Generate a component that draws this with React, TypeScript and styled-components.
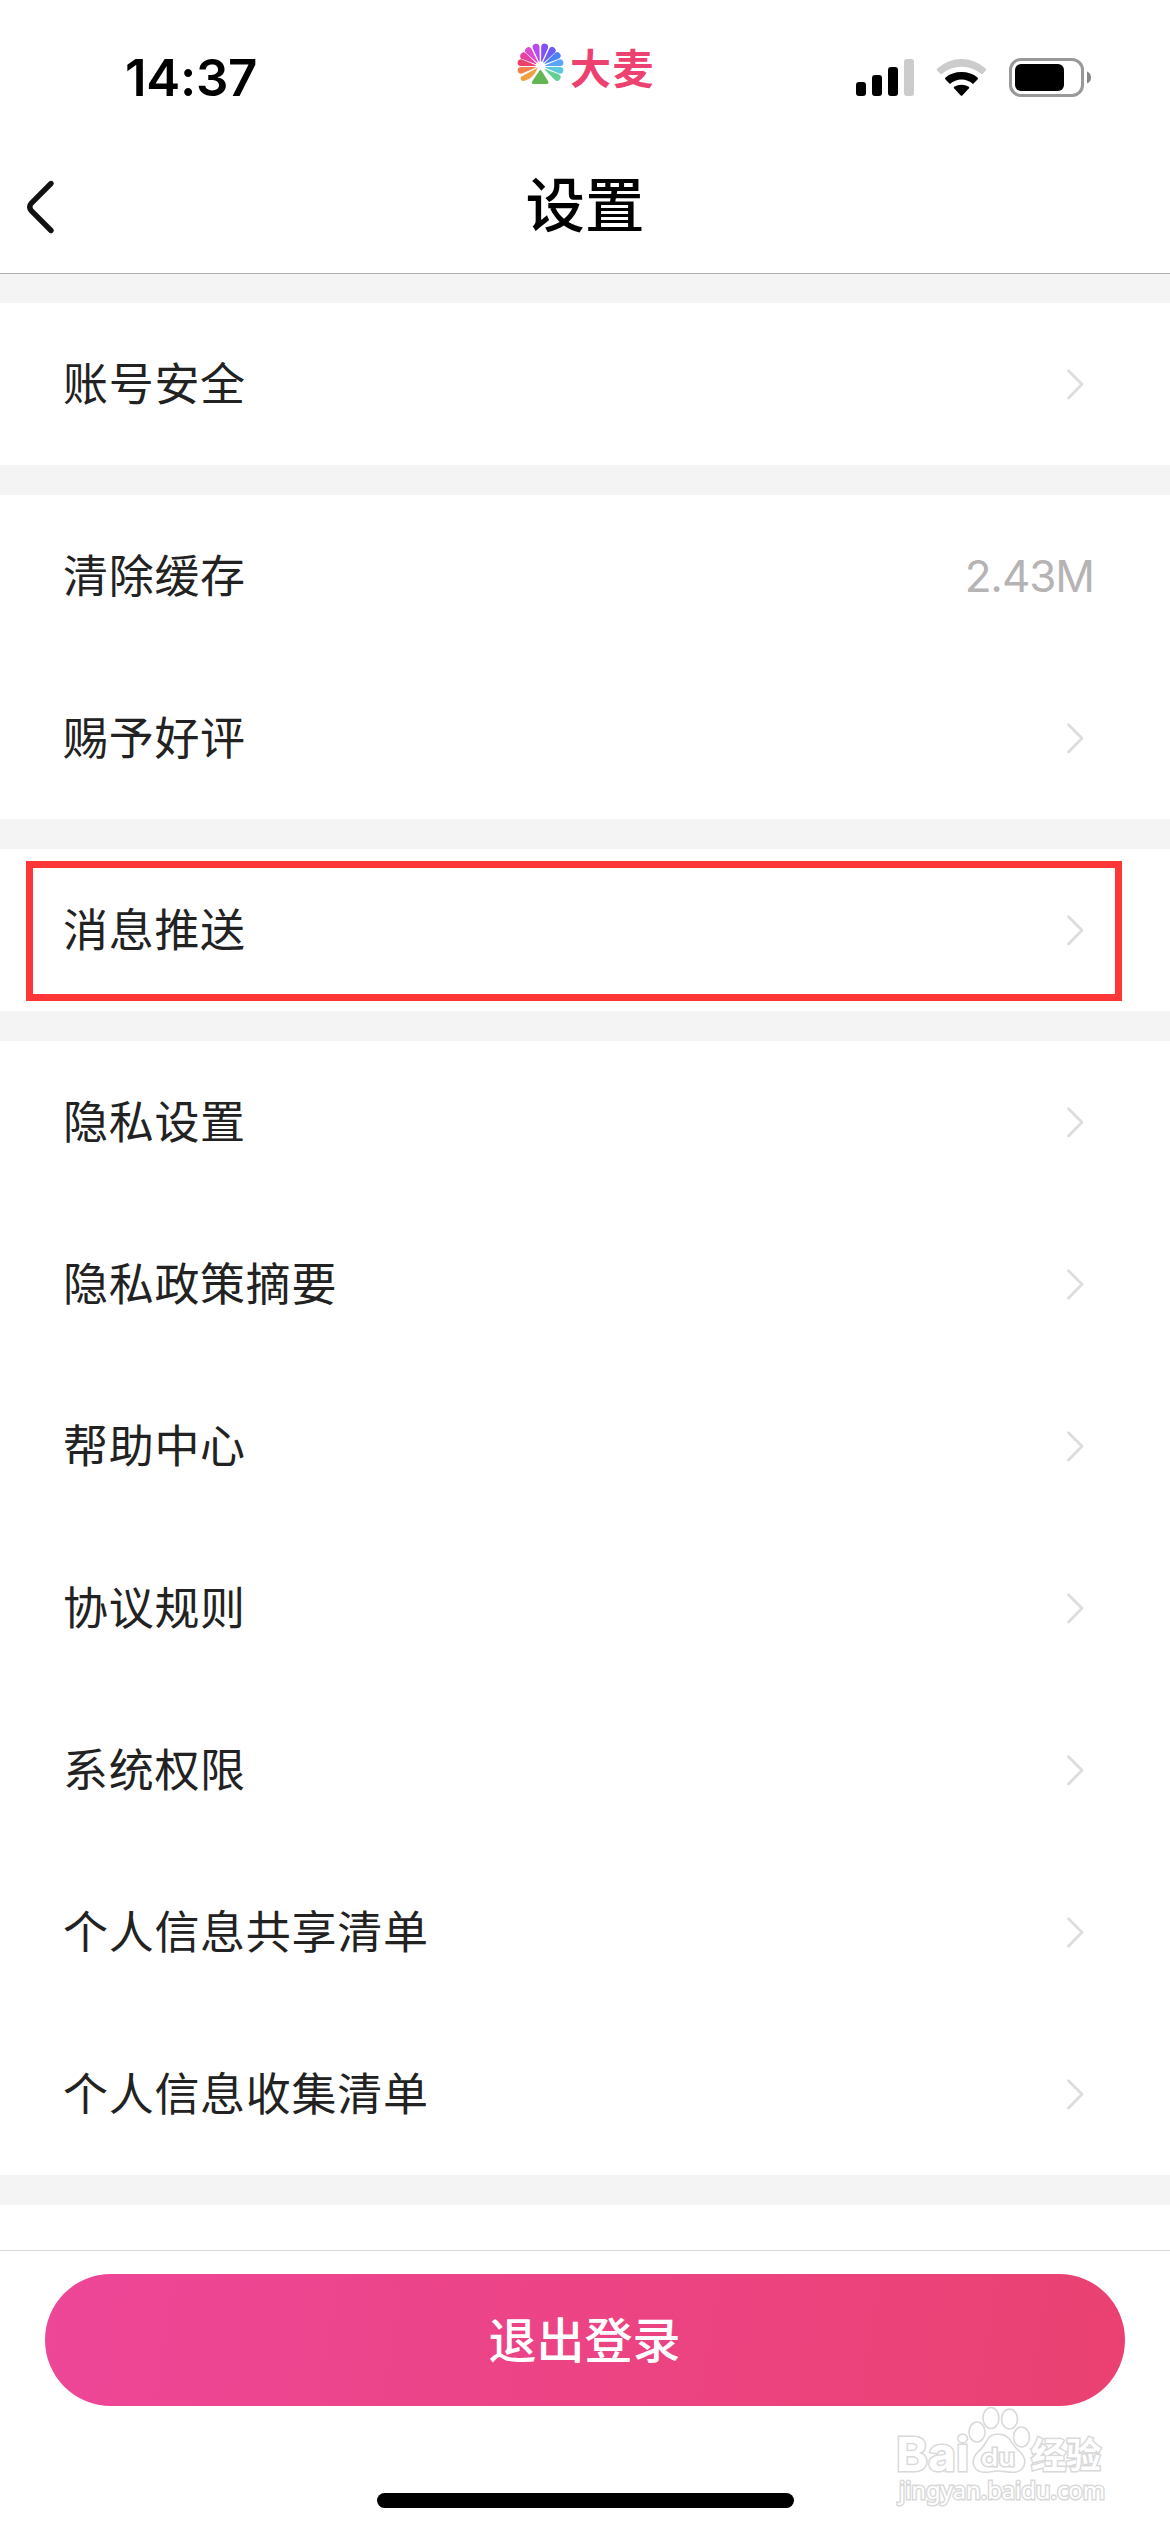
import React from "react";
import styled, { createGlobalStyle } from "styled-components";

const Global = createGlobalStyle`
  * { box-sizing: border-box; }
  body {
    margin: 0;
    background: #fff;
    font-family: Inter, "Noto Sans CJK SC", sans-serif;
  }
`;

const Screen = styled.div`
  position: relative;
  display: flex;
  flex-direction: column;
  width: 1170px;
  height: 2532px;
  overflow: hidden;
  background: #fff;
`;

const StatusBar = styled.header`
  display: grid;
  grid-template-columns: 391px 1fr auto;
  height: 141px;
  padding: 0 78px 0 125px;
`;

const Clock = styled.time`
  padding-top: 47px;
  font-size: 51px;
  line-height: 62px;
  font-weight: 600;
  letter-spacing: -0.3px;
  color: #000;
`;

const Brand = styled.div`
  display: flex;
  padding-top: 43px;
`;

const BrandName = styled.span`
  margin: -3px 0 0 4px;
  font-family: "Noto Sans CJK SC", sans-serif;
  font-size: 41px;
  line-height: 52px;
  font-weight: 700;
  letter-spacing: 1.5px;
  color: #ed4170;
`;

const StatusIcons = styled.div`
  display: flex;
  justify-content: flex-end;
  align-items: flex-start;
  padding-top: 58px;
`;

const StatusIcon = styled.svg<{ $gap?: number }>`
  flex: none;
  margin-left: ${({ $gap = 0 }) => $gap}px;
`;

const NavBar = styled.nav`
  display: grid;
  grid-template-columns: 80px 1fr 80px;
  align-items: center;
  height: 133px;
  border-bottom: 1px solid #adadad;
`;

const BackButton = styled.button`
  display: flex;
  padding: 0 0 0 24px;
  border: 0;
  background: none;
`;

const Title = styled.h1`
  margin: 0;
  padding-bottom: 12px;
  font-family: "Noto Sans CJK SC", sans-serif;
  font-size: 59.5px;
  line-height: 80px;
  font-weight: 500;
  text-align: center;
  color: #000;
`;

const Groups = styled.main`
  display: flex;
  flex-direction: column;
  gap: 30px;
  height: 1931px;
  padding: 29px 0 30px;
  background: #f4f4f4;
`;

const Group = styled.section`
  background: #fff;
`;

const Row = styled.div`
  position: relative;
  display: flex;
  align-items: center;
  justify-content: space-between;
  height: 162px;
  padding: 0 75px 0 63px;
`;

const Label = styled.span`
  padding-bottom: 4px;
  font-family: "Noto Sans CJK SC", sans-serif;
  font-size: 45px;
  letter-spacing: 0.7px;
  line-height: 64px;
  color: #222;
`;

const Value = styled.span`
  padding-right: 1px;
  font-size: 44px;
  line-height: 60px;
  letter-spacing: -1.1px;
  color: #b5b3b4;
`;

const Highlight = styled.div`
  position: absolute;
  top: 12px;
  left: 26px;
  width: 1096px;
  height: 140px;
  border: 7px solid #fd3737;
`;

const Footer = styled.footer`
  margin-top: 45px;
  padding: 23px 45px 0;
  border-top: 1px solid #dadada;
`;

const LogoutButton = styled.button`
  display: block;
  width: 100%;
  height: 132px;
  padding: 0 1px 6px 0;
  border: 0;
  border-radius: 66px;
  background: linear-gradient(100deg, #ee4698, #ea4171);
  font-family: "Noto Sans CJK SC", sans-serif;
  font-size: 48px;
  font-weight: 500;
  color: #fff;
`;

const HomeIndicator = styled.div`
  position: absolute;
  left: 377px;
  bottom: 24px;
  width: 417px;
  height: 15px;
  border-radius: 8px;
  background: #000;
`;

const Watermark = styled.svg`
  position: absolute;
  left: 880px;
  top: 2380px;
`;

const petals = [
  "#f2814c", "#ec4169", "#e83fa0", "#df4bd0", "#b44af0", "#8350f5",
  "#6a5cf6", "#4b83f7", "#5aa5f6", "#5bc8dc", "#64cf93",
];

const petalAngles = [-101, -79, -58, -37, -13, 12, 36, 57, 79, 101, 123];

const PetalLogo = () => (
  <svg width="50" height="46" viewBox="0 0 50 46">
    {petals.map((c, i) => (
      <path
        key={c}
        d="M24.100 18.500 21.100 4Q20.800 .300 24.500 .200 28.200 .300 27.900 4L24.900 18.500Z"
        fill={c}
        transform={`rotate(${petalAngles[i]} 24.500 23.500)`}
      />
    ))}
    <path d="M22 24.500 5.500 33.500q-1.300 1-.8 3 .8 2 3.800 1.300Q17 36 22 24.500Z" fill="#f0a043" />
    <path d="m23.200 28-6.500 9.500q-2 3.500 1 3.500h13q3 0 1-3.500l-6-9.500q-1.300-2-2.500 0Z" fill="#65b653" />
  </svg>
);

const Signal = () => (
  <StatusIcon width="60" height="40" viewBox="0 0 60 40">
    <rect x="1" y="24" width="10" height="14" rx="3" />
    <rect x="17" y="17" width="10" height="21" rx="3" />
    <rect x="33" y="9" width="10" height="29" rx="3" />
    <rect x="49" y="1" width="10" height="37" rx="3" fill="#ccc" />
  </StatusIcon>
);

const Wifi = () => (
  <StatusIcon $gap={21} width="52" height="40" viewBox="0 0 52 40">
    <path d="M1.300 12.500Q0 11.500 1.300 10.500 12 1 25.500 1t24.200 9.500q1.300 1 0 2L46 16.500Q37 8.700 25.500 8.700T5 16.500Z" fill="#ccc" />
    <path d="M9.500 21.500q-1-1 0-2Q16 14 25.500 14t16 5.500q1 1 0 2L37 26Q32 21.500 25.500 21.500T14 26Z" />
    <path d="M18.200 30.500q-.9-1 0-1.700Q21.500 26.700 25.500 26.700t7.300 2.100q.9.700 0 1.700L26.500 37.300q-1 1-2 0Z" />
  </StatusIcon>
);

const Battery = () => (
  <StatusIcon $gap={20} width="84" height="40" viewBox="0 0 84 40">
    <rect x="2.500" y="1.500" width="72" height="36" rx="10.500" fill="none" stroke="#999" strokeWidth="3" />
    <rect x="7" y="6" width="49" height="27" rx="6" />
    <path d="M79 13.500q4 1.500 4 6t-4 6Z" fill="#888" />
  </StatusIcon>
);

const Chevron = () => (
  <svg width="40" height="40" viewBox="0 0 40 40" fill="none" stroke="#ddd" strokeWidth="2.800" strokeLinecap="round" strokeLinejoin="round">
    <path d="M13.500 6.700 27 20.300 13.500 34" />
  </svg>
);

type Item = { label: string; value?: string; highlighted?: boolean };

const groups: Item[][] = [
  [{ label: "账号安全" }],
  [{ label: "清除缓存", value: "2.43M" }, { label: "赐予好评" }],
  [{ label: "消息推送", highlighted: true }],
  [
    { label: "隐私设置" },
    { label: "隐私政策摘要" },
    { label: "帮助中心" },
    { label: "协议规则" },
    { label: "系统权限" },
    { label: "个人信息共享清单" },
    { label: "个人信息收集清单" },
  ],
];

export default function App() {
  return (
    <Screen>
      <Global />
      <StatusBar>
        <Clock>14:37</Clock>
        <Brand>
          <PetalLogo />
          <BrandName>大麦</BrandName>
        </Brand>
        <StatusIcons>
          <Signal />
          <Wifi />
          <Battery />
        </StatusIcons>
      </StatusBar>
      <NavBar>
        <BackButton aria-label="返回">
          <svg width="34" height="56" viewBox="0 0 34 56" fill="none" stroke="#111" strokeWidth="5.400" strokeLinecap="round">
            <path d="M27 4.500 7.500 24Q4 28 7.500 32L27 51.500" />
          </svg>
        </BackButton>
        <Title>设置</Title>
      </NavBar>
      <Groups>
        {groups.map((items) => (
          <Group key={items[0].label}>
            {items.map(({ label, value, highlighted }) => (
              <Row key={label}>
                <Label>{label}</Label>
                {value ? <Value>{value}</Value> : <Chevron />}
                {highlighted && <Highlight />}
              </Row>
            ))}
          </Group>
        ))}
      </Groups>
      <Footer>
        <LogoutButton>退出登录</LogoutButton>
      </Footer>
      <HomeIndicator />
      <Watermark width="290" height="152" viewBox="0 0 290 152" fill="#fff" stroke="#d9d9d9" strokeWidth="1.600">
        <ellipse cx="97" cy="52" rx="8" ry="10" />
        <ellipse cx="111" cy="38" rx="8" ry="10.500" />
        <ellipse cx="129.500" cy="39" rx="8" ry="10" />
        <ellipse cx="141.500" cy="57" rx="8" ry="10" />
        <path d="M118 54c-12 0-11 11-19 17-6 5-8 13-3 18 6 6 14 2 22 2s18 4 24-2c5-6 3-13-3-18-8-6-8-17-21-17Z" />
        <g fontFamily="Inter, sans-serif" paintOrder="stroke">
          <text x="16" y="91" fontSize="47" fontWeight="700" textLength="73" lengthAdjust="spacingAndGlyphs" strokeWidth="3">Bai</text>
          <text x="101" y="86" fontSize="24" fontWeight="500" textLength="34" lengthAdjust="spacingAndGlyphs" strokeWidth="3">du</text>
          <text x="151" y="88" fontFamily="Noto Sans CJK SC, sans-serif" fontSize="35" fontWeight="700" strokeWidth="3">经验</text>
          <text x="19" y="119" fontFamily="Noto Sans, sans-serif" fontSize="24" textLength="206" lengthAdjust="spacingAndGlyphs" strokeWidth="3">jingyan.baidu.com</text>
        </g>
      </Watermark>
    </Screen>
  );
}
